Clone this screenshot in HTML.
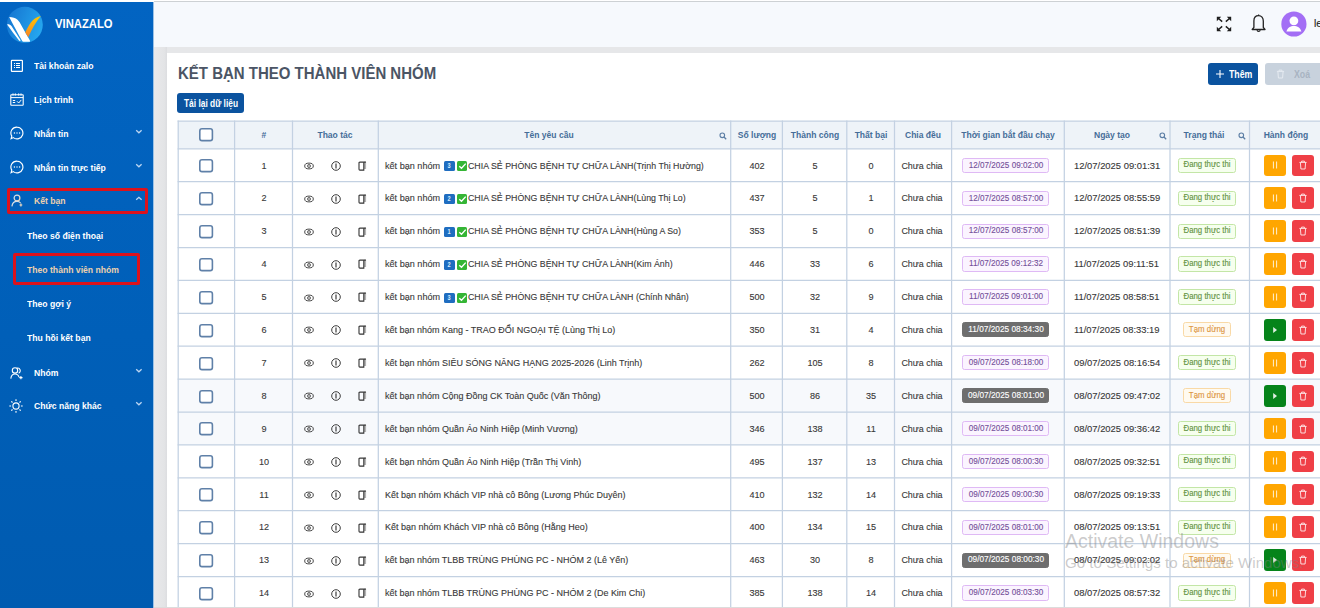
<!DOCTYPE html>
<html><head><meta charset="utf-8">
<style>
*{box-sizing:border-box;margin:0;padding:0}
html,body{width:1320px;height:608px;overflow:hidden;background:#e6e7e9;font-family:"Liberation Sans",sans-serif;position:relative}
.abs{position:absolute}
.t{position:absolute;white-space:nowrap;line-height:1}
#sidebar{left:0;top:2px;width:153px;height:606px;background:linear-gradient(180deg,#0264c2,#005fb8 55%,#005bb0)}
.grid{position:absolute;background:#c8d5e4}
.cb{position:absolute;width:14px;height:14px;border:2px solid #5a7fa9;border-radius:2.5px;background:#fff}
.tag{position:absolute;height:15.2px;border:1px solid;border-radius:2.5px}
.tp{background:#fbf4ff;border-color:#dfb9f5}
.td{background:#6e6e6e;border-color:#6e6e6e}
.tg{background:#f6ffee;border-color:#c3e6a6}
.to{background:#fffaf0;border-color:#f9d9a6}
.ab{position:absolute;width:21.8px;height:21.7px;border-radius:3px}
.ab svg{position:absolute;left:50%;top:50%;transform:translate(-50%,-50%)}
</style></head><body>
<div class="abs" style="left:0;top:0;width:1320px;height:2px;background:#fff"></div>
<div id="sidebar" class="abs"></div>
<div class="abs" style="left:153px;top:2px;width:1px;height:606px;background:#9cc2e6"></div>
<div class="abs" style="left:154px;top:1px;width:1166px;height:1px;background:#cdd1d4"></div>
<div class="abs" style="left:154px;top:2px;width:1166px;height:45px;background:#f6f9fd"></div>
<div class="abs" style="left:154px;top:47px;width:13px;height:561px;background:linear-gradient(90deg,#e9e9eb,#e3e4e6 80%,#dcdde0)"></div>
<div class="abs" style="left:166.7px;top:53px;width:1160px;height:560px;background:#fff"></div>

<svg class="abs" style="left:0;top:0" width="50" height="50" viewBox="0 0 50 50">
<defs><linearGradient id="og" x1="0" y1="0" x2="0" y2="1"><stop offset="0" stop-color="#ffc800"/><stop offset="1" stop-color="#f5832a"/></linearGradient></defs>
<linearGradient id="cg" x1="0" y1="0.3" x2="1" y2="0.7"><stop offset="0" stop-color="#1677d2"/><stop offset="1" stop-color="#26a9f0"/></linearGradient><circle cx="24.8" cy="24.8" r="18" fill="url(#cg)"/>
<path d="M9.2 17 C12.5 17.2 15.5 17.8 17.5 19.8 C19 21.2 20.5 23.5 22.4 27.3 L29.9 40.4 C30.3 41.1 29.9 41.7 29.2 41.7 L23.4 41.7 C22.8 41.7 22.4 41.3 22.1 40.7 C18 33.5 13.5 25.5 9.2 17 Z" fill="#fff"/>
<path d="M7.1 24.4 C8.6 24.1 10.1 24.5 11.6 26.2 L20.8 40.6 L19.4 40.9 C15 35.5 11 30 7.1 24.4 Z" fill="#fff"/>
<path d="M40.8 16 C36.5 17 33 19.5 30.5 23 C28.5 26 26.6 29.5 25.2 32.6 L28.3 37.2 C31.5 30 35.5 22.5 40.8 16 Z" fill="url(#og)"/>
</svg>
<div class="t" style="left:55.00px;top:18px;font-size:12.8px;color:#fff;font-weight:bold;transform:scaleX(0.88);transform-origin:0 0;">VINAZALO</div>
<div class="abs" style="left:10px;top:59px;line-height:0"><svg width="14" height="14" viewBox="0 0 14 14"><rect x="1.4" y="1.4" width="11" height="11" rx="0.6" fill="none" stroke="#fff" stroke-width="1.2"/><path d="M4 4.5H5M4 6.5H5M4 8.5H5M6 4.5H10M6 6.5H10M6 8.5H10" stroke="#fff" stroke-width="1"/></svg></div>
<div class="t" style="left:34.00px;top:61px;font-size:9.8px;color:#fff;font-weight:bold;transform:scaleX(0.88);transform-origin:0 0;">Tài khoản zalo</div>
<div class="abs" style="left:9.8px;top:93.3px;line-height:0"><svg width="14" height="13" viewBox="0 0 14 13"><rect x="0.8" y="1.8" width="12.4" height="10.4" rx="0.5" fill="none" stroke="#fff" stroke-width="1.1"/><path d="M0.8 4.6H13.2M3 0.4V2.6M5.3 0.4V2.6M8.7 0.4V2.6M11 0.4V2.6M2.8 7.5H5.2M2.8 9.5H5.2M7 8.3L8.7 10L11.3 6.9" fill="none" stroke="#fff" stroke-width="1"/></svg></div>
<div class="t" style="left:34.00px;top:95px;font-size:9.8px;color:#fff;font-weight:bold;transform:scaleX(0.88);transform-origin:0 0;">Lịch trình</div>
<div class="abs" style="left:9.6px;top:126.3px;line-height:0"><svg width="14" height="14" viewBox="0 0 14 14"><path d="M7 1.1A5.9 5.9 0 1 1 3.3 11.6L1.1 12.7L1.8 10.1A5.9 5.9 0 0 1 7 1.1Z" fill="none" stroke="#fff" stroke-width="1.15"/><circle cx="4.4" cy="7" r="0.7" fill="#fff"/><circle cx="7" cy="7" r="0.7" fill="#fff"/><circle cx="9.6" cy="7" r="0.7" fill="#fff"/></svg></div>
<div class="t" style="left:34.00px;top:129px;font-size:9.8px;color:#fff;font-weight:bold;transform:scaleX(0.88);transform-origin:0 0;">Nhắn tin</div>
<svg class="abs" style="left:135px;top:128.7px" width="8" height="6" viewBox="0 0 8 6"><path d="M1.2 1.3L3.9 3.8L6.6 1.3" fill="none" stroke="#bcd6f2" stroke-width="1.3"/></svg>
<div class="abs" style="left:9.6px;top:160.3px;line-height:0"><svg width="14" height="14" viewBox="0 0 14 14"><path d="M7 1.1A5.9 5.9 0 1 1 3.3 11.6L1.1 12.7L1.8 10.1A5.9 5.9 0 0 1 7 1.1Z" fill="none" stroke="#fff" stroke-width="1.15"/><circle cx="4.4" cy="7" r="0.7" fill="#fff"/><circle cx="7" cy="7" r="0.7" fill="#fff"/><circle cx="9.6" cy="7" r="0.7" fill="#fff"/></svg></div>
<div class="t" style="left:34.00px;top:163px;font-size:9.8px;color:#fff;font-weight:bold;transform:scaleX(0.88);transform-origin:0 0;">Nhắn tin trực tiếp</div>
<svg class="abs" style="left:135px;top:162.7px" width="8" height="6" viewBox="0 0 8 6"><path d="M1.2 1.3L3.9 3.8L6.6 1.3" fill="none" stroke="#bcd6f2" stroke-width="1.3"/></svg>
<div class="abs" style="left:10.5px;top:194.3px;line-height:0"><svg width="13" height="13" viewBox="0 0 13 13"><defs><linearGradient id="ug" x1="0" y1="0" x2="1" y2="1"><stop offset="0" stop-color="#cfe3f7"/><stop offset="1" stop-color="#efd3b0"/></linearGradient></defs><circle cx="6" cy="4" r="2.9" fill="none" stroke="url(#ug)" stroke-width="1.2"/><path d="M0.9 12.3C1.4 9 3.4 7.4 6 7.4C7.6 7.4 8.8 8 9.6 9M9.9 9.6V12.4M8.5 11H11.3" fill="none" stroke="url(#ug)" stroke-width="1.2"/></svg></div>
<div class="t" style="left:34.00px;top:196px;font-size:9.8px;color:#ecd0ae;font-weight:bold;transform:scaleX(0.88);transform-origin:0 0;">Kết bạn</div>
<svg class="abs" style="left:135px;top:195.7px" width="8" height="6" viewBox="0 0 8 6"><path d="M1.2 3.8L3.9 1.3L6.6 3.8" fill="none" stroke="#bcd6f2" stroke-width="1.3"/></svg>
<div class="abs" style="left:10.3px;top:365.5px;line-height:0"><svg width="14" height="14" viewBox="0 0 14 14"><circle cx="5" cy="4.4" r="2.7" fill="none" stroke="#fff" stroke-width="1.1"/><path d="M6.6 2.3A2.5 2.5 0 1 1 8.6 7.2" fill="none" stroke="#fff" stroke-width="1.1"/><path d="M0.8 12.6C1.2 9.6 2.8 8 5 8C7 8 8.5 9.2 9 11.2M10.9 10V13.2M9.3 11.6H12.5" fill="none" stroke="#fff" stroke-width="1.1"/></svg></div>
<div class="t" style="left:34.00px;top:368px;font-size:9.8px;color:#fff;font-weight:bold;transform:scaleX(0.88);transform-origin:0 0;">Nhóm</div>
<svg class="abs" style="left:135px;top:367.7px" width="8" height="6" viewBox="0 0 8 6"><path d="M1.2 1.3L3.9 3.8L6.6 1.3" fill="none" stroke="#bcd6f2" stroke-width="1.3"/></svg>
<div class="abs" style="left:9.4px;top:399.3px;line-height:0"><svg width="14" height="14" viewBox="0 0 14 14"><circle cx="7" cy="7" r="3.1" fill="none" stroke="#fff" stroke-width="1.1"/><path d="M7 0.3V2.1M7 11.9V13.7M0.3 7H2.1M11.9 7H13.7M2.3 2.3L3.5 3.5M10.5 10.5L11.7 11.7M2.3 11.7L3.5 10.5M10.5 3.5L11.7 2.3" stroke="#fff" stroke-width="1.1"/></svg></div>
<div class="t" style="left:34.00px;top:401px;font-size:9.8px;color:#fff;font-weight:bold;transform:scaleX(0.88);transform-origin:0 0;">Chức năng khác</div>
<svg class="abs" style="left:135px;top:400.7px" width="8" height="6" viewBox="0 0 8 6"><path d="M1.2 1.3L3.9 3.8L6.6 1.3" fill="none" stroke="#bcd6f2" stroke-width="1.3"/></svg>
<div class="t" style="left:26.50px;top:231px;font-size:9.8px;color:#fff;font-weight:bold;transform:scaleX(0.88);transform-origin:0 0;">Theo số điện thoại</div>
<div class="t" style="left:26.50px;top:265px;font-size:9.8px;color:#ecd0ae;font-weight:bold;transform:scaleX(0.88);transform-origin:0 0;">Theo thành viên nhóm</div>
<div class="t" style="left:26.50px;top:299px;font-size:9.8px;color:#fff;font-weight:bold;transform:scaleX(0.88);transform-origin:0 0;">Theo gợi ý</div>
<div class="t" style="left:26.50px;top:333px;font-size:9.8px;color:#fff;font-weight:bold;transform:scaleX(0.88);transform-origin:0 0;">Thu hồi kết bạn</div>
<div class="abs" style="left:7px;top:188px;width:141px;height:26px;border:3px solid #dc121c;border-radius:2px"></div>
<div class="abs" style="left:13px;top:253px;width:127px;height:32px;border:3px solid #dc121c;border-radius:2px"></div>
<svg class="abs" style="left:1216px;top:16px" width="16" height="16" viewBox="0 0 16 16"><g fill="#1e1e1e">
<path d="M0.8 0.8H5.2L0.8 5.2Z"/><path d="M15.2 0.8H10.8L15.2 5.2Z"/><path d="M0.8 15.2H5.2L0.8 10.8Z"/><path d="M15.2 15.2H10.8L15.2 10.8Z"/></g>
<path d="M2.5 2.5L6.2 5.6M13.5 2.5L9.8 5.6M2.5 13.5L6.2 10.4M13.5 13.5L9.8 10.4" stroke="#1e1e1e" stroke-width="1.5"/></svg>
<svg class="abs" style="left:1251px;top:14px" width="15" height="19" viewBox="0 0 15 19">
<path d="M7.6 1.6C4.7 1.6 2.9 3.9 2.9 6.9V13.4L1.2 15.5H14L12.3 13.4V6.9C12.3 3.9 10.5 1.6 7.6 1.6Z" fill="none" stroke="#222" stroke-width="1.3" stroke-linejoin="round"/>
<path d="M7.6 0.5V1.8" stroke="#222" stroke-width="1.2"/><path d="M6.1 15.9A1.5 1.5 0 0 0 9.1 15.9" fill="none" stroke="#222" stroke-width="1.1"/></svg>
<svg class="abs" style="left:1280.5px;top:10.8px" width="26" height="26" viewBox="0 0 26 26">
<circle cx="12.9" cy="13" r="12.6" fill="#a36ef5"/><circle cx="12.9" cy="9.8" r="4.4" fill="#fff"/><path d="M5.4 20.6C6.5 16.8 9.5 15.1 12.9 15.1S19.3 16.8 20.4 20.6Z" fill="#fff"/></svg>
<div class="t" style="left:1313.60px;top:18px;font-size:11px;color:#262626;font-weight:normal;transform:scaleX(0.95);-webkit-text-stroke:0.12px currentColor;transform-origin:0 0;">le</div>
<div class="t" style="left:178.40px;top:65px;font-size:17.4px;color:#4b5565;font-weight:bold;transform:scaleX(0.862);transform-origin:0 0;">KẾT BẠN THEO THÀNH VIÊN NHÓM</div>
<div class="abs" style="left:177.4px;top:92.8px;width:66.8px;height:20.5px;background:#0b539f;border-radius:3px"></div>
<div class="t" style="left:10.80px;width:400px;text-align:center;top:99px;font-size:10px;color:#fff;font-weight:bold;transform:scaleX(0.84);transform-origin:50% 0;">Tải lại dữ liệu</div>
<div class="abs" style="left:1208px;top:62.7px;width:49.8px;height:22.1px;background:#0b539f;border-radius:3px"></div>
<svg class="abs" style="left:1214.5px;top:69px" width="10" height="10" viewBox="0 0 10 10"><path d="M5 1V9M1 5H9" stroke="#fff" stroke-width="1.1"/></svg>
<div class="t" style="left:1228.80px;top:70px;font-size:10.2px;color:#fff;font-weight:bold;transform:scaleX(0.86);transform-origin:0 0;">Thêm</div>
<div class="abs" style="left:1265.3px;top:62.7px;width:70px;height:22.1px;background:#c8d2dd;border-radius:3px"></div>
<svg class="abs" style="left:1276px;top:68.5px" width="9" height="10" viewBox="0 0 9 10"><path d="M0.9 2.4H8.1M3.1 2.3V1.1H5.9V2.3M1.9 2.6L2.4 9H6.6L7.1 2.6" fill="none" stroke="#e6ebf1" stroke-width="1"/></svg>
<div class="t" style="left:1294.00px;top:70px;font-size:10.2px;color:#a8b4c2;font-weight:bold;transform:scaleX(0.86);transform-origin:0 0;">Xoá</div>
<div class="abs" style="left:178.2px;top:121.2px;width:1151.8px;height:27.6px;background:#eef3f8"></div>
<div class="abs" style="left:178.2px;top:379.1px;width:1151.8px;height:32.9px;background:#f7f9fc"></div>
<div class="abs" style="left:178.2px;top:412.0px;width:1151.8px;height:32.9px;background:#f7f9fc"></div>
<svg class="abs" style="left:0;top:0" width="1320" height="608" viewBox="0 0 1320 608"><g stroke="#c3d1e2" stroke-width="1.25" fill="none"><path d="M178.20 120.60V608" /><path d="M234.60 120.60V608" /><path d="M292.50 120.60V608" /><path d="M378.30 120.60V608" /><path d="M730.70 120.60V608" /><path d="M782.40 120.60V608" /><path d="M846.80 120.60V608" /><path d="M894.50 120.60V608" /><path d="M951.60 120.60V608" /><path d="M1064.30 120.60V608" /><path d="M1170.00 120.60V608" /><path d="M1249.50 120.60V608" /><path d="M177.60 121.20H1320" /><path d="M177.60 148.80H1320" /><path d="M177.60 181.70H1320" /><path d="M177.60 214.60H1320" /><path d="M177.60 247.50H1320" /><path d="M177.60 280.40H1320" /><path d="M177.60 313.30H1320" /><path d="M177.60 346.20H1320" /><path d="M177.60 379.10H1320" /><path d="M177.60 412.00H1320" /><path d="M177.60 444.90H1320" /><path d="M177.60 477.80H1320" /><path d="M177.60 510.70H1320" /><path d="M177.60 543.60H1320" /><path d="M177.60 576.50H1320" /><path d="M177.60 609.40H1320" /></g></svg>
<div class="abs" style="left:199.2px;top:128.4px;line-height:0"><svg width="15" height="14" viewBox="0 0 15 14"><rect x="0.8" y="0.8" width="12.6" height="11.8" rx="2.2" fill="#fff" stroke="#5f80a8" stroke-width="1.6"/></svg></div>
<div class="t" style="left:63.55px;width:400px;text-align:center;top:130px;font-size:9.6px;color:#456d98;font-weight:bold;transform:scaleX(0.89);transform-origin:50% 0;">#</div>
<div class="t" style="left:135.40px;width:400px;text-align:center;top:130px;font-size:9.6px;color:#456d98;font-weight:bold;transform:scaleX(0.89);transform-origin:50% 0;">Thao tác</div>
<div class="t" style="left:349.20px;width:400px;text-align:center;top:130px;font-size:9.6px;color:#456d98;font-weight:bold;transform:scaleX(0.89);transform-origin:50% 0;">Tên yêu cầu</div>
<div class="abs" style="left:719.4000000000001px;top:131.8px;line-height:0"><svg width="8" height="8" viewBox="0 0 8 8"><circle cx="3.3" cy="3.3" r="2.3" fill="none" stroke="#5c7ea5" stroke-width="1.1"/><path d="M5 5L7.2 7.2" stroke="#5c7ea5" stroke-width="1.3"/></svg></div>
<div class="t" style="left:556.55px;width:400px;text-align:center;top:130px;font-size:9.6px;color:#456d98;font-weight:bold;transform:scaleX(0.89);transform-origin:50% 0;">Số lượng</div>
<div class="t" style="left:614.60px;width:400px;text-align:center;top:130px;font-size:9.6px;color:#456d98;font-weight:bold;transform:scaleX(0.89);transform-origin:50% 0;">Thành công</div>
<div class="t" style="left:670.65px;width:400px;text-align:center;top:130px;font-size:9.6px;color:#456d98;font-weight:bold;transform:scaleX(0.89);transform-origin:50% 0;">Thất bại</div>
<div class="t" style="left:723.05px;width:400px;text-align:center;top:130px;font-size:9.6px;color:#456d98;font-weight:bold;transform:scaleX(0.89);transform-origin:50% 0;">Chia đều</div>
<div class="t" style="left:807.95px;width:400px;text-align:center;top:130px;font-size:9.6px;color:#456d98;font-weight:bold;transform:scaleX(0.89);transform-origin:50% 0;">Thời gian bắt đầu chạy</div>
<div class="t" style="left:911.85px;width:400px;text-align:center;top:130px;font-size:9.6px;color:#456d98;font-weight:bold;transform:scaleX(0.89);transform-origin:50% 0;">Ngày tạo</div>
<div class="abs" style="left:1158.7px;top:131.8px;line-height:0"><svg width="8" height="8" viewBox="0 0 8 8"><circle cx="3.3" cy="3.3" r="2.3" fill="none" stroke="#5c7ea5" stroke-width="1.1"/><path d="M5 5L7.2 7.2" stroke="#5c7ea5" stroke-width="1.3"/></svg></div>
<div class="t" style="left:1004.45px;width:400px;text-align:center;top:130px;font-size:9.6px;color:#456d98;font-weight:bold;transform:scaleX(0.89);transform-origin:50% 0;">Trạng thái</div>
<div class="abs" style="left:1238.2px;top:131.8px;line-height:0"><svg width="8" height="8" viewBox="0 0 8 8"><circle cx="3.3" cy="3.3" r="2.3" fill="none" stroke="#5c7ea5" stroke-width="1.1"/><path d="M5 5L7.2 7.2" stroke="#5c7ea5" stroke-width="1.3"/></svg></div>
<div class="t" style="left:1085.50px;width:400px;text-align:center;top:130px;font-size:9.6px;color:#456d98;font-weight:bold;transform:scaleX(0.89);transform-origin:50% 0;">Hành động</div>
<div class="abs" style="left:199.2px;top:159.25px;line-height:0"><svg width="15" height="14" viewBox="0 0 15 14"><rect x="0.8" y="0.8" width="12.6" height="11.8" rx="2.2" fill="#fff" stroke="#5f80a8" stroke-width="1.6"/></svg></div>
<div class="t" style="left:63.55px;width:400px;text-align:center;top:161px;font-size:9.9px;color:#383838;font-weight:normal;transform:scaleX(0.92);-webkit-text-stroke:0.12px currentColor;transform-origin:50% 0;">1</div>
<div class="abs" style="left:303.5px;top:161.9px;line-height:0"><svg width="10" height="8" viewBox="0 0 10 8"><ellipse cx="5" cy="4" rx="4.3" ry="2.9" fill="none" stroke="#4a4a4a" stroke-width="1"/><circle cx="5" cy="4" r="1.5" fill="none" stroke="#555" stroke-width="0.9"/><path d="M5 2.8V5.2" stroke="#666" stroke-width="0.7"/></svg></div>
<div class="abs" style="left:330.5px;top:160.8px;line-height:0"><svg width="10" height="10" viewBox="0 0 10 10"><circle cx="5" cy="5" r="4.3" fill="none" stroke="#3c3c3c" stroke-width="1"/><path d="M5 2.6V7.4" stroke="#2a2a2a" stroke-width="1.1"/></svg></div>
<div class="abs" style="left:357.6px;top:160.75px;line-height:0"><svg width="9" height="10" viewBox="0 0 9 10"><path d="M6 0.7H8.1V8H6Z" fill="#b4b4b4"/><path d="M1 2.1Q1 1.2 1.9 1.2H7.9" stroke="#3a3a3a" stroke-width="1.2" fill="none"/><path d="M1 1.8V8.2Q1 9.1 1.9 9.1H5.8V1.2" stroke="#333" stroke-width="1.1" fill="none"/></svg></div>
<div class="t" style="left:384.70px;top:161px;font-size:9.9px;color:#383838;font-weight:normal;transform:scaleX(0.92);-webkit-text-stroke:0.12px currentColor;transform-origin:0 0;">kết bạn nhóm </div>
<div class="abs" style="left:443.8px;top:161.05px;width:11px;height:10px;background:#1f6dc0;border-radius:1.5px"></div>
<div class="t" style="left:249.30px;width:400px;text-align:center;top:162px;font-size:7px;color:#d9ecff;font-weight:bold;transform:scaleX(0.8);transform-origin:50% 0;">3</div>
<div class="abs" style="left:456.6px;top:161.05px;width:10.8px;height:10px;background:#35b535;border-radius:1.5px"></div>
<svg class="abs" style="left:457.6px;top:162.05px" width="9" height="8" viewBox="0 0 9 8"><path d="M1.3 4.2L3.5 6.2L7.7 1.6" fill="none" stroke="#fff" stroke-width="1.4"/></svg>
<div class="t" style="left:468.00px;top:161px;font-size:9.9px;color:#383838;font-weight:normal;transform:scaleX(0.891);-webkit-text-stroke:0.12px currentColor;transform-origin:0 0;">CHIA SẺ PHÒNG BỆNH TỰ CHỮA LÀNH(Trịnh Thị Hường)</div>
<div class="t" style="left:556.55px;width:400px;text-align:center;top:161px;font-size:9.9px;color:#383838;font-weight:normal;transform:scaleX(0.92);-webkit-text-stroke:0.12px currentColor;transform-origin:50% 0;">402</div>
<div class="t" style="left:614.60px;width:400px;text-align:center;top:161px;font-size:9.9px;color:#383838;font-weight:normal;transform:scaleX(0.92);-webkit-text-stroke:0.12px currentColor;transform-origin:50% 0;">5</div>
<div class="t" style="left:670.65px;width:400px;text-align:center;top:161px;font-size:9.9px;color:#383838;font-weight:normal;transform:scaleX(0.92);-webkit-text-stroke:0.12px currentColor;transform-origin:50% 0;">0</div>
<div class="t" style="left:722.05px;width:400px;text-align:center;top:161px;font-size:9.9px;color:#383838;font-weight:normal;transform:scaleX(0.903);-webkit-text-stroke:0.12px currentColor;transform-origin:50% 0;">Chưa chia</div>
<div class="tag tp" style="left:962.3px;width:86.3px;top:157.75px"></div>
<div class="t" style="left:805.90px;width:400px;text-align:center;top:161px;font-size:8.8px;color:#74509a;font-weight:normal;transform:scaleX(0.924);-webkit-text-stroke:0.12px currentColor;transform-origin:50% 0;">12/07/2025 09:02:00</div>
<div class="t" style="left:1073.50px;top:161px;font-size:9.9px;color:#383838;font-weight:normal;transform:scaleX(0.952);-webkit-text-stroke:0.12px currentColor;transform-origin:0 0;">12/07/2025 09:01:31</div>
<div class="tag tg" style="left:1177.8px;width:57.9px;top:157.75px"></div>
<div class="t" style="left:1007.20px;width:400px;text-align:center;top:160px;font-size:8.8px;color:#62923f;font-weight:normal;transform:scaleX(0.889);-webkit-text-stroke:0.12px currentColor;transform-origin:50% 0;">Đang thực thi</div>
<div class="ab" style="left:1264.1px;top:154.55px;background:#ffa600"><svg width="6" height="8" viewBox="0 0 6 8"><rect x="0.9" y="0.5" width="1.1" height="7" fill="#fff" opacity=".75"/><rect x="4" y="0.5" width="1.1" height="7" fill="#fff" opacity=".75"/></svg></div>
<div class="ab" style="left:1292px;top:154.55px;background:#ef3f46"><svg width="9" height="10" viewBox="0 0 9 10"><path d="M0.9 2.4H8.1M3.1 2.3V1.1H5.9V2.3M1.9 2.6L2.4 9H6.6L7.1 2.6" fill="none" stroke="#fff" stroke-opacity=".85" stroke-width="0.95" stroke-linejoin="round"/></svg></div>
<div class="abs" style="left:199.2px;top:192.15px;line-height:0"><svg width="15" height="14" viewBox="0 0 15 14"><rect x="0.8" y="0.8" width="12.6" height="11.8" rx="2.2" fill="#fff" stroke="#5f80a8" stroke-width="1.6"/></svg></div>
<div class="t" style="left:63.55px;width:400px;text-align:center;top:193px;font-size:9.9px;color:#383838;font-weight:normal;transform:scaleX(0.92);-webkit-text-stroke:0.12px currentColor;transform-origin:50% 0;">2</div>
<div class="abs" style="left:303.5px;top:194.8px;line-height:0"><svg width="10" height="8" viewBox="0 0 10 8"><ellipse cx="5" cy="4" rx="4.3" ry="2.9" fill="none" stroke="#4a4a4a" stroke-width="1"/><circle cx="5" cy="4" r="1.5" fill="none" stroke="#555" stroke-width="0.9"/><path d="M5 2.8V5.2" stroke="#666" stroke-width="0.7"/></svg></div>
<div class="abs" style="left:330.5px;top:193.70000000000002px;line-height:0"><svg width="10" height="10" viewBox="0 0 10 10"><circle cx="5" cy="5" r="4.3" fill="none" stroke="#3c3c3c" stroke-width="1"/><path d="M5 2.6V7.4" stroke="#2a2a2a" stroke-width="1.1"/></svg></div>
<div class="abs" style="left:357.6px;top:193.65px;line-height:0"><svg width="9" height="10" viewBox="0 0 9 10"><path d="M6 0.7H8.1V8H6Z" fill="#b4b4b4"/><path d="M1 2.1Q1 1.2 1.9 1.2H7.9" stroke="#3a3a3a" stroke-width="1.2" fill="none"/><path d="M1 1.8V8.2Q1 9.1 1.9 9.1H5.8V1.2" stroke="#333" stroke-width="1.1" fill="none"/></svg></div>
<div class="t" style="left:384.70px;top:193px;font-size:9.9px;color:#383838;font-weight:normal;transform:scaleX(0.92);-webkit-text-stroke:0.12px currentColor;transform-origin:0 0;">kết bạn nhóm </div>
<div class="abs" style="left:443.8px;top:193.95px;width:11px;height:10px;background:#1f6dc0;border-radius:1.5px"></div>
<div class="t" style="left:249.30px;width:400px;text-align:center;top:195px;font-size:7px;color:#d9ecff;font-weight:bold;transform:scaleX(0.8);transform-origin:50% 0;">2</div>
<div class="abs" style="left:456.6px;top:193.95px;width:10.8px;height:10px;background:#35b535;border-radius:1.5px"></div>
<svg class="abs" style="left:457.6px;top:194.95px" width="9" height="8" viewBox="0 0 9 8"><path d="M1.3 4.2L3.5 6.2L7.7 1.6" fill="none" stroke="#fff" stroke-width="1.4"/></svg>
<div class="t" style="left:468.00px;top:193px;font-size:9.9px;color:#383838;font-weight:normal;transform:scaleX(0.891);-webkit-text-stroke:0.12px currentColor;transform-origin:0 0;">CHIA SẺ PHÒNG BỆNH TỰ CHỮA LÀNH(Lùng Thị Lo)</div>
<div class="t" style="left:556.55px;width:400px;text-align:center;top:193px;font-size:9.9px;color:#383838;font-weight:normal;transform:scaleX(0.92);-webkit-text-stroke:0.12px currentColor;transform-origin:50% 0;">437</div>
<div class="t" style="left:614.60px;width:400px;text-align:center;top:193px;font-size:9.9px;color:#383838;font-weight:normal;transform:scaleX(0.92);-webkit-text-stroke:0.12px currentColor;transform-origin:50% 0;">5</div>
<div class="t" style="left:670.65px;width:400px;text-align:center;top:193px;font-size:9.9px;color:#383838;font-weight:normal;transform:scaleX(0.92);-webkit-text-stroke:0.12px currentColor;transform-origin:50% 0;">1</div>
<div class="t" style="left:722.05px;width:400px;text-align:center;top:193px;font-size:9.9px;color:#383838;font-weight:normal;transform:scaleX(0.903);-webkit-text-stroke:0.12px currentColor;transform-origin:50% 0;">Chưa chia</div>
<div class="tag tp" style="left:962.3px;width:86.3px;top:190.65px"></div>
<div class="t" style="left:805.90px;width:400px;text-align:center;top:194px;font-size:8.8px;color:#74509a;font-weight:normal;transform:scaleX(0.924);-webkit-text-stroke:0.12px currentColor;transform-origin:50% 0;">12/07/2025 08:57:00</div>
<div class="t" style="left:1073.50px;top:193px;font-size:9.9px;color:#383838;font-weight:normal;transform:scaleX(0.952);-webkit-text-stroke:0.12px currentColor;transform-origin:0 0;">12/07/2025 08:55:59</div>
<div class="tag tg" style="left:1177.8px;width:57.9px;top:190.65px"></div>
<div class="t" style="left:1007.20px;width:400px;text-align:center;top:193px;font-size:8.8px;color:#62923f;font-weight:normal;transform:scaleX(0.889);-webkit-text-stroke:0.12px currentColor;transform-origin:50% 0;">Đang thực thi</div>
<div class="ab" style="left:1264.1px;top:187.45px;background:#ffa600"><svg width="6" height="8" viewBox="0 0 6 8"><rect x="0.9" y="0.5" width="1.1" height="7" fill="#fff" opacity=".75"/><rect x="4" y="0.5" width="1.1" height="7" fill="#fff" opacity=".75"/></svg></div>
<div class="ab" style="left:1292px;top:187.45px;background:#ef3f46"><svg width="9" height="10" viewBox="0 0 9 10"><path d="M0.9 2.4H8.1M3.1 2.3V1.1H5.9V2.3M1.9 2.6L2.4 9H6.6L7.1 2.6" fill="none" stroke="#fff" stroke-opacity=".85" stroke-width="0.95" stroke-linejoin="round"/></svg></div>
<div class="abs" style="left:199.2px;top:225.05px;line-height:0"><svg width="15" height="14" viewBox="0 0 15 14"><rect x="0.8" y="0.8" width="12.6" height="11.8" rx="2.2" fill="#fff" stroke="#5f80a8" stroke-width="1.6"/></svg></div>
<div class="t" style="left:63.55px;width:400px;text-align:center;top:226px;font-size:9.9px;color:#383838;font-weight:normal;transform:scaleX(0.92);-webkit-text-stroke:0.12px currentColor;transform-origin:50% 0;">3</div>
<div class="abs" style="left:303.5px;top:227.70000000000002px;line-height:0"><svg width="10" height="8" viewBox="0 0 10 8"><ellipse cx="5" cy="4" rx="4.3" ry="2.9" fill="none" stroke="#4a4a4a" stroke-width="1"/><circle cx="5" cy="4" r="1.5" fill="none" stroke="#555" stroke-width="0.9"/><path d="M5 2.8V5.2" stroke="#666" stroke-width="0.7"/></svg></div>
<div class="abs" style="left:330.5px;top:226.60000000000002px;line-height:0"><svg width="10" height="10" viewBox="0 0 10 10"><circle cx="5" cy="5" r="4.3" fill="none" stroke="#3c3c3c" stroke-width="1"/><path d="M5 2.6V7.4" stroke="#2a2a2a" stroke-width="1.1"/></svg></div>
<div class="abs" style="left:357.6px;top:226.55px;line-height:0"><svg width="9" height="10" viewBox="0 0 9 10"><path d="M6 0.7H8.1V8H6Z" fill="#b4b4b4"/><path d="M1 2.1Q1 1.2 1.9 1.2H7.9" stroke="#3a3a3a" stroke-width="1.2" fill="none"/><path d="M1 1.8V8.2Q1 9.1 1.9 9.1H5.8V1.2" stroke="#333" stroke-width="1.1" fill="none"/></svg></div>
<div class="t" style="left:384.70px;top:226px;font-size:9.9px;color:#383838;font-weight:normal;transform:scaleX(0.92);-webkit-text-stroke:0.12px currentColor;transform-origin:0 0;">kết bạn nhóm </div>
<div class="abs" style="left:443.8px;top:226.85px;width:11px;height:10px;background:#1f6dc0;border-radius:1.5px"></div>
<div class="t" style="left:249.30px;width:400px;text-align:center;top:228px;font-size:7px;color:#d9ecff;font-weight:bold;transform:scaleX(0.8);transform-origin:50% 0;">1</div>
<div class="abs" style="left:456.6px;top:226.85px;width:10.8px;height:10px;background:#35b535;border-radius:1.5px"></div>
<svg class="abs" style="left:457.6px;top:227.85px" width="9" height="8" viewBox="0 0 9 8"><path d="M1.3 4.2L3.5 6.2L7.7 1.6" fill="none" stroke="#fff" stroke-width="1.4"/></svg>
<div class="t" style="left:468.00px;top:226px;font-size:9.9px;color:#383838;font-weight:normal;transform:scaleX(0.891);-webkit-text-stroke:0.12px currentColor;transform-origin:0 0;">CHIA SẺ PHÒNG BỆNH TỰ CHỮA LÀNH(Hùng A So)</div>
<div class="t" style="left:556.55px;width:400px;text-align:center;top:226px;font-size:9.9px;color:#383838;font-weight:normal;transform:scaleX(0.92);-webkit-text-stroke:0.12px currentColor;transform-origin:50% 0;">353</div>
<div class="t" style="left:614.60px;width:400px;text-align:center;top:226px;font-size:9.9px;color:#383838;font-weight:normal;transform:scaleX(0.92);-webkit-text-stroke:0.12px currentColor;transform-origin:50% 0;">5</div>
<div class="t" style="left:670.65px;width:400px;text-align:center;top:226px;font-size:9.9px;color:#383838;font-weight:normal;transform:scaleX(0.92);-webkit-text-stroke:0.12px currentColor;transform-origin:50% 0;">0</div>
<div class="t" style="left:722.05px;width:400px;text-align:center;top:226px;font-size:9.9px;color:#383838;font-weight:normal;transform:scaleX(0.903);-webkit-text-stroke:0.12px currentColor;transform-origin:50% 0;">Chưa chia</div>
<div class="tag tp" style="left:962.3px;width:86.3px;top:223.55px"></div>
<div class="t" style="left:805.90px;width:400px;text-align:center;top:226px;font-size:8.8px;color:#74509a;font-weight:normal;transform:scaleX(0.924);-webkit-text-stroke:0.12px currentColor;transform-origin:50% 0;">12/07/2025 08:57:00</div>
<div class="t" style="left:1073.50px;top:226px;font-size:9.9px;color:#383838;font-weight:normal;transform:scaleX(0.952);-webkit-text-stroke:0.12px currentColor;transform-origin:0 0;">12/07/2025 08:51:39</div>
<div class="tag tg" style="left:1177.8px;width:57.9px;top:223.55px"></div>
<div class="t" style="left:1007.20px;width:400px;text-align:center;top:226px;font-size:8.8px;color:#62923f;font-weight:normal;transform:scaleX(0.889);-webkit-text-stroke:0.12px currentColor;transform-origin:50% 0;">Đang thực thi</div>
<div class="ab" style="left:1264.1px;top:220.35px;background:#ffa600"><svg width="6" height="8" viewBox="0 0 6 8"><rect x="0.9" y="0.5" width="1.1" height="7" fill="#fff" opacity=".75"/><rect x="4" y="0.5" width="1.1" height="7" fill="#fff" opacity=".75"/></svg></div>
<div class="ab" style="left:1292px;top:220.35px;background:#ef3f46"><svg width="9" height="10" viewBox="0 0 9 10"><path d="M0.9 2.4H8.1M3.1 2.3V1.1H5.9V2.3M1.9 2.6L2.4 9H6.6L7.1 2.6" fill="none" stroke="#fff" stroke-opacity=".85" stroke-width="0.95" stroke-linejoin="round"/></svg></div>
<div class="abs" style="left:199.2px;top:257.95px;line-height:0"><svg width="15" height="14" viewBox="0 0 15 14"><rect x="0.8" y="0.8" width="12.6" height="11.8" rx="2.2" fill="#fff" stroke="#5f80a8" stroke-width="1.6"/></svg></div>
<div class="t" style="left:63.55px;width:400px;text-align:center;top:259px;font-size:9.9px;color:#383838;font-weight:normal;transform:scaleX(0.92);-webkit-text-stroke:0.12px currentColor;transform-origin:50% 0;">4</div>
<div class="abs" style="left:303.5px;top:260.59999999999997px;line-height:0"><svg width="10" height="8" viewBox="0 0 10 8"><ellipse cx="5" cy="4" rx="4.3" ry="2.9" fill="none" stroke="#4a4a4a" stroke-width="1"/><circle cx="5" cy="4" r="1.5" fill="none" stroke="#555" stroke-width="0.9"/><path d="M5 2.8V5.2" stroke="#666" stroke-width="0.7"/></svg></div>
<div class="abs" style="left:330.5px;top:259.5px;line-height:0"><svg width="10" height="10" viewBox="0 0 10 10"><circle cx="5" cy="5" r="4.3" fill="none" stroke="#3c3c3c" stroke-width="1"/><path d="M5 2.6V7.4" stroke="#2a2a2a" stroke-width="1.1"/></svg></div>
<div class="abs" style="left:357.6px;top:259.45px;line-height:0"><svg width="9" height="10" viewBox="0 0 9 10"><path d="M6 0.7H8.1V8H6Z" fill="#b4b4b4"/><path d="M1 2.1Q1 1.2 1.9 1.2H7.9" stroke="#3a3a3a" stroke-width="1.2" fill="none"/><path d="M1 1.8V8.2Q1 9.1 1.9 9.1H5.8V1.2" stroke="#333" stroke-width="1.1" fill="none"/></svg></div>
<div class="t" style="left:384.70px;top:259px;font-size:9.9px;color:#383838;font-weight:normal;transform:scaleX(0.92);-webkit-text-stroke:0.12px currentColor;transform-origin:0 0;">kết bạn nhóm </div>
<div class="abs" style="left:443.8px;top:259.75px;width:11px;height:10px;background:#1f6dc0;border-radius:1.5px"></div>
<div class="t" style="left:249.30px;width:400px;text-align:center;top:261px;font-size:7px;color:#d9ecff;font-weight:bold;transform:scaleX(0.8);transform-origin:50% 0;">2</div>
<div class="abs" style="left:456.6px;top:259.75px;width:10.8px;height:10px;background:#35b535;border-radius:1.5px"></div>
<svg class="abs" style="left:457.6px;top:260.75px" width="9" height="8" viewBox="0 0 9 8"><path d="M1.3 4.2L3.5 6.2L7.7 1.6" fill="none" stroke="#fff" stroke-width="1.4"/></svg>
<div class="t" style="left:468.00px;top:259px;font-size:9.9px;color:#383838;font-weight:normal;transform:scaleX(0.891);-webkit-text-stroke:0.12px currentColor;transform-origin:0 0;">CHIA SẺ PHÒNG BỆNH TỰ CHỮA LÀNH(Kim Ánh)</div>
<div class="t" style="left:556.55px;width:400px;text-align:center;top:259px;font-size:9.9px;color:#383838;font-weight:normal;transform:scaleX(0.92);-webkit-text-stroke:0.12px currentColor;transform-origin:50% 0;">446</div>
<div class="t" style="left:614.60px;width:400px;text-align:center;top:259px;font-size:9.9px;color:#383838;font-weight:normal;transform:scaleX(0.92);-webkit-text-stroke:0.12px currentColor;transform-origin:50% 0;">33</div>
<div class="t" style="left:670.65px;width:400px;text-align:center;top:259px;font-size:9.9px;color:#383838;font-weight:normal;transform:scaleX(0.92);-webkit-text-stroke:0.12px currentColor;transform-origin:50% 0;">6</div>
<div class="t" style="left:722.05px;width:400px;text-align:center;top:259px;font-size:9.9px;color:#383838;font-weight:normal;transform:scaleX(0.903);-webkit-text-stroke:0.12px currentColor;transform-origin:50% 0;">Chưa chia</div>
<div class="tag tp" style="left:962.3px;width:86.3px;top:256.45px"></div>
<div class="t" style="left:805.90px;width:400px;text-align:center;top:259px;font-size:8.8px;color:#74509a;font-weight:normal;transform:scaleX(0.924);-webkit-text-stroke:0.12px currentColor;transform-origin:50% 0;">11/07/2025 09:12:32</div>
<div class="t" style="left:1073.50px;top:259px;font-size:9.9px;color:#383838;font-weight:normal;transform:scaleX(0.952);-webkit-text-stroke:0.12px currentColor;transform-origin:0 0;">11/07/2025 09:11:51</div>
<div class="tag tg" style="left:1177.8px;width:57.9px;top:256.45px"></div>
<div class="t" style="left:1007.20px;width:400px;text-align:center;top:259px;font-size:8.8px;color:#62923f;font-weight:normal;transform:scaleX(0.889);-webkit-text-stroke:0.12px currentColor;transform-origin:50% 0;">Đang thực thi</div>
<div class="ab" style="left:1264.1px;top:253.25px;background:#ffa600"><svg width="6" height="8" viewBox="0 0 6 8"><rect x="0.9" y="0.5" width="1.1" height="7" fill="#fff" opacity=".75"/><rect x="4" y="0.5" width="1.1" height="7" fill="#fff" opacity=".75"/></svg></div>
<div class="ab" style="left:1292px;top:253.25px;background:#ef3f46"><svg width="9" height="10" viewBox="0 0 9 10"><path d="M0.9 2.4H8.1M3.1 2.3V1.1H5.9V2.3M1.9 2.6L2.4 9H6.6L7.1 2.6" fill="none" stroke="#fff" stroke-opacity=".85" stroke-width="0.95" stroke-linejoin="round"/></svg></div>
<div class="abs" style="left:199.2px;top:290.84999999999997px;line-height:0"><svg width="15" height="14" viewBox="0 0 15 14"><rect x="0.8" y="0.8" width="12.6" height="11.8" rx="2.2" fill="#fff" stroke="#5f80a8" stroke-width="1.6"/></svg></div>
<div class="t" style="left:63.55px;width:400px;text-align:center;top:292px;font-size:9.9px;color:#383838;font-weight:normal;transform:scaleX(0.92);-webkit-text-stroke:0.12px currentColor;transform-origin:50% 0;">5</div>
<div class="abs" style="left:303.5px;top:293.49999999999994px;line-height:0"><svg width="10" height="8" viewBox="0 0 10 8"><ellipse cx="5" cy="4" rx="4.3" ry="2.9" fill="none" stroke="#4a4a4a" stroke-width="1"/><circle cx="5" cy="4" r="1.5" fill="none" stroke="#555" stroke-width="0.9"/><path d="M5 2.8V5.2" stroke="#666" stroke-width="0.7"/></svg></div>
<div class="abs" style="left:330.5px;top:292.4px;line-height:0"><svg width="10" height="10" viewBox="0 0 10 10"><circle cx="5" cy="5" r="4.3" fill="none" stroke="#3c3c3c" stroke-width="1"/><path d="M5 2.6V7.4" stroke="#2a2a2a" stroke-width="1.1"/></svg></div>
<div class="abs" style="left:357.6px;top:292.34999999999997px;line-height:0"><svg width="9" height="10" viewBox="0 0 9 10"><path d="M6 0.7H8.1V8H6Z" fill="#b4b4b4"/><path d="M1 2.1Q1 1.2 1.9 1.2H7.9" stroke="#3a3a3a" stroke-width="1.2" fill="none"/><path d="M1 1.8V8.2Q1 9.1 1.9 9.1H5.8V1.2" stroke="#333" stroke-width="1.1" fill="none"/></svg></div>
<div class="t" style="left:384.70px;top:292px;font-size:9.9px;color:#383838;font-weight:normal;transform:scaleX(0.92);-webkit-text-stroke:0.12px currentColor;transform-origin:0 0;">kết bạn nhóm </div>
<div class="abs" style="left:443.8px;top:292.65px;width:11px;height:10px;background:#1f6dc0;border-radius:1.5px"></div>
<div class="t" style="left:249.30px;width:400px;text-align:center;top:294px;font-size:7px;color:#d9ecff;font-weight:bold;transform:scaleX(0.8);transform-origin:50% 0;">3</div>
<div class="abs" style="left:456.6px;top:292.65px;width:10.8px;height:10px;background:#35b535;border-radius:1.5px"></div>
<svg class="abs" style="left:457.6px;top:293.65px" width="9" height="8" viewBox="0 0 9 8"><path d="M1.3 4.2L3.5 6.2L7.7 1.6" fill="none" stroke="#fff" stroke-width="1.4"/></svg>
<div class="t" style="left:468.00px;top:292px;font-size:9.9px;color:#383838;font-weight:normal;transform:scaleX(0.891);-webkit-text-stroke:0.12px currentColor;transform-origin:0 0;">CHIA SẺ PHÒNG BỆNH TỰ CHỮA LÀNH (Chính Nhân)</div>
<div class="t" style="left:556.55px;width:400px;text-align:center;top:292px;font-size:9.9px;color:#383838;font-weight:normal;transform:scaleX(0.92);-webkit-text-stroke:0.12px currentColor;transform-origin:50% 0;">500</div>
<div class="t" style="left:614.60px;width:400px;text-align:center;top:292px;font-size:9.9px;color:#383838;font-weight:normal;transform:scaleX(0.92);-webkit-text-stroke:0.12px currentColor;transform-origin:50% 0;">32</div>
<div class="t" style="left:670.65px;width:400px;text-align:center;top:292px;font-size:9.9px;color:#383838;font-weight:normal;transform:scaleX(0.92);-webkit-text-stroke:0.12px currentColor;transform-origin:50% 0;">9</div>
<div class="t" style="left:722.05px;width:400px;text-align:center;top:292px;font-size:9.9px;color:#383838;font-weight:normal;transform:scaleX(0.903);-webkit-text-stroke:0.12px currentColor;transform-origin:50% 0;">Chưa chia</div>
<div class="tag tp" style="left:962.3px;width:86.3px;top:289.35px"></div>
<div class="t" style="left:805.90px;width:400px;text-align:center;top:292px;font-size:8.8px;color:#74509a;font-weight:normal;transform:scaleX(0.924);-webkit-text-stroke:0.12px currentColor;transform-origin:50% 0;">11/07/2025 09:01:00</div>
<div class="t" style="left:1073.50px;top:292px;font-size:9.9px;color:#383838;font-weight:normal;transform:scaleX(0.952);-webkit-text-stroke:0.12px currentColor;transform-origin:0 0;">11/07/2025 08:58:51</div>
<div class="tag tg" style="left:1177.8px;width:57.9px;top:289.35px"></div>
<div class="t" style="left:1007.20px;width:400px;text-align:center;top:292px;font-size:8.8px;color:#62923f;font-weight:normal;transform:scaleX(0.889);-webkit-text-stroke:0.12px currentColor;transform-origin:50% 0;">Đang thực thi</div>
<div class="ab" style="left:1264.1px;top:286.15px;background:#ffa600"><svg width="6" height="8" viewBox="0 0 6 8"><rect x="0.9" y="0.5" width="1.1" height="7" fill="#fff" opacity=".75"/><rect x="4" y="0.5" width="1.1" height="7" fill="#fff" opacity=".75"/></svg></div>
<div class="ab" style="left:1292px;top:286.15px;background:#ef3f46"><svg width="9" height="10" viewBox="0 0 9 10"><path d="M0.9 2.4H8.1M3.1 2.3V1.1H5.9V2.3M1.9 2.6L2.4 9H6.6L7.1 2.6" fill="none" stroke="#fff" stroke-opacity=".85" stroke-width="0.95" stroke-linejoin="round"/></svg></div>
<div class="abs" style="left:199.2px;top:323.75px;line-height:0"><svg width="15" height="14" viewBox="0 0 15 14"><rect x="0.8" y="0.8" width="12.6" height="11.8" rx="2.2" fill="#fff" stroke="#5f80a8" stroke-width="1.6"/></svg></div>
<div class="t" style="left:63.55px;width:400px;text-align:center;top:325px;font-size:9.9px;color:#383838;font-weight:normal;transform:scaleX(0.92);-webkit-text-stroke:0.12px currentColor;transform-origin:50% 0;">6</div>
<div class="abs" style="left:303.5px;top:326.4px;line-height:0"><svg width="10" height="8" viewBox="0 0 10 8"><ellipse cx="5" cy="4" rx="4.3" ry="2.9" fill="none" stroke="#4a4a4a" stroke-width="1"/><circle cx="5" cy="4" r="1.5" fill="none" stroke="#555" stroke-width="0.9"/><path d="M5 2.8V5.2" stroke="#666" stroke-width="0.7"/></svg></div>
<div class="abs" style="left:330.5px;top:325.3px;line-height:0"><svg width="10" height="10" viewBox="0 0 10 10"><circle cx="5" cy="5" r="4.3" fill="none" stroke="#3c3c3c" stroke-width="1"/><path d="M5 2.6V7.4" stroke="#2a2a2a" stroke-width="1.1"/></svg></div>
<div class="abs" style="left:357.6px;top:325.25px;line-height:0"><svg width="9" height="10" viewBox="0 0 9 10"><path d="M6 0.7H8.1V8H6Z" fill="#b4b4b4"/><path d="M1 2.1Q1 1.2 1.9 1.2H7.9" stroke="#3a3a3a" stroke-width="1.2" fill="none"/><path d="M1 1.8V8.2Q1 9.1 1.9 9.1H5.8V1.2" stroke="#333" stroke-width="1.1" fill="none"/></svg></div>
<div class="t" style="left:384.70px;top:325px;font-size:9.9px;color:#383838;font-weight:normal;transform:scaleX(0.91);-webkit-text-stroke:0.12px currentColor;transform-origin:0 0;">kết bạn nhóm Kang - TRAO ĐỔI NGOẠI TỆ (Lùng Thị Lo)</div>
<div class="t" style="left:556.55px;width:400px;text-align:center;top:325px;font-size:9.9px;color:#383838;font-weight:normal;transform:scaleX(0.92);-webkit-text-stroke:0.12px currentColor;transform-origin:50% 0;">350</div>
<div class="t" style="left:614.60px;width:400px;text-align:center;top:325px;font-size:9.9px;color:#383838;font-weight:normal;transform:scaleX(0.92);-webkit-text-stroke:0.12px currentColor;transform-origin:50% 0;">31</div>
<div class="t" style="left:670.65px;width:400px;text-align:center;top:325px;font-size:9.9px;color:#383838;font-weight:normal;transform:scaleX(0.92);-webkit-text-stroke:0.12px currentColor;transform-origin:50% 0;">4</div>
<div class="t" style="left:722.05px;width:400px;text-align:center;top:325px;font-size:9.9px;color:#383838;font-weight:normal;transform:scaleX(0.903);-webkit-text-stroke:0.12px currentColor;transform-origin:50% 0;">Chưa chia</div>
<div class="tag td" style="left:962.3px;width:86.3px;top:322.25px"></div>
<div class="t" style="left:805.90px;width:400px;text-align:center;top:325px;font-size:8.8px;color:#fff;font-weight:normal;transform:scaleX(0.943);-webkit-text-stroke:0.12px currentColor;transform-origin:50% 0;">11/07/2025 08:34:30</div>
<div class="t" style="left:1073.50px;top:325px;font-size:9.9px;color:#383838;font-weight:normal;transform:scaleX(0.952);-webkit-text-stroke:0.12px currentColor;transform-origin:0 0;">11/07/2025 08:33:19</div>
<div class="tag to" style="left:1183.4px;width:47.8px;top:322.25px"></div>
<div class="t" style="left:1007.30px;width:400px;text-align:center;top:325px;font-size:8.8px;color:#dc9440;font-weight:normal;transform:scaleX(0.894);-webkit-text-stroke:0.12px currentColor;transform-origin:50% 0;">Tạm dừng</div>
<div class="ab" style="left:1264.1px;top:319.05px;background:#06841a"><svg width="6" height="8" viewBox="0 0 6 8"><path d="M1.2 0.9L5 4L1.2 7.1Z" fill="#fff" opacity=".88"/></svg></div>
<div class="ab" style="left:1292px;top:319.05px;background:#ef3f46"><svg width="9" height="10" viewBox="0 0 9 10"><path d="M0.9 2.4H8.1M3.1 2.3V1.1H5.9V2.3M1.9 2.6L2.4 9H6.6L7.1 2.6" fill="none" stroke="#fff" stroke-opacity=".85" stroke-width="0.95" stroke-linejoin="round"/></svg></div>
<div class="abs" style="left:199.2px;top:356.65px;line-height:0"><svg width="15" height="14" viewBox="0 0 15 14"><rect x="0.8" y="0.8" width="12.6" height="11.8" rx="2.2" fill="#fff" stroke="#5f80a8" stroke-width="1.6"/></svg></div>
<div class="t" style="left:63.55px;width:400px;text-align:center;top:358px;font-size:9.9px;color:#383838;font-weight:normal;transform:scaleX(0.92);-webkit-text-stroke:0.12px currentColor;transform-origin:50% 0;">7</div>
<div class="abs" style="left:303.5px;top:359.29999999999995px;line-height:0"><svg width="10" height="8" viewBox="0 0 10 8"><ellipse cx="5" cy="4" rx="4.3" ry="2.9" fill="none" stroke="#4a4a4a" stroke-width="1"/><circle cx="5" cy="4" r="1.5" fill="none" stroke="#555" stroke-width="0.9"/><path d="M5 2.8V5.2" stroke="#666" stroke-width="0.7"/></svg></div>
<div class="abs" style="left:330.5px;top:358.2px;line-height:0"><svg width="10" height="10" viewBox="0 0 10 10"><circle cx="5" cy="5" r="4.3" fill="none" stroke="#3c3c3c" stroke-width="1"/><path d="M5 2.6V7.4" stroke="#2a2a2a" stroke-width="1.1"/></svg></div>
<div class="abs" style="left:357.6px;top:358.15px;line-height:0"><svg width="9" height="10" viewBox="0 0 9 10"><path d="M6 0.7H8.1V8H6Z" fill="#b4b4b4"/><path d="M1 2.1Q1 1.2 1.9 1.2H7.9" stroke="#3a3a3a" stroke-width="1.2" fill="none"/><path d="M1 1.8V8.2Q1 9.1 1.9 9.1H5.8V1.2" stroke="#333" stroke-width="1.1" fill="none"/></svg></div>
<div class="t" style="left:384.70px;top:358px;font-size:9.9px;color:#383838;font-weight:normal;transform:scaleX(0.91);-webkit-text-stroke:0.12px currentColor;transform-origin:0 0;">kết bạn nhóm SIÊU SÓNG NÂNG HẠNG 2025-2026 (Linh Trịnh)</div>
<div class="t" style="left:556.55px;width:400px;text-align:center;top:358px;font-size:9.9px;color:#383838;font-weight:normal;transform:scaleX(0.92);-webkit-text-stroke:0.12px currentColor;transform-origin:50% 0;">262</div>
<div class="t" style="left:614.60px;width:400px;text-align:center;top:358px;font-size:9.9px;color:#383838;font-weight:normal;transform:scaleX(0.92);-webkit-text-stroke:0.12px currentColor;transform-origin:50% 0;">105</div>
<div class="t" style="left:670.65px;width:400px;text-align:center;top:358px;font-size:9.9px;color:#383838;font-weight:normal;transform:scaleX(0.92);-webkit-text-stroke:0.12px currentColor;transform-origin:50% 0;">8</div>
<div class="t" style="left:722.05px;width:400px;text-align:center;top:358px;font-size:9.9px;color:#383838;font-weight:normal;transform:scaleX(0.903);-webkit-text-stroke:0.12px currentColor;transform-origin:50% 0;">Chưa chia</div>
<div class="tag tp" style="left:962.3px;width:86.3px;top:355.15px"></div>
<div class="t" style="left:805.90px;width:400px;text-align:center;top:358px;font-size:8.8px;color:#74509a;font-weight:normal;transform:scaleX(0.924);-webkit-text-stroke:0.12px currentColor;transform-origin:50% 0;">09/07/2025 08:18:00</div>
<div class="t" style="left:1073.50px;top:358px;font-size:9.9px;color:#383838;font-weight:normal;transform:scaleX(0.952);-webkit-text-stroke:0.12px currentColor;transform-origin:0 0;">09/07/2025 08:16:54</div>
<div class="tag tg" style="left:1177.8px;width:57.9px;top:355.15px"></div>
<div class="t" style="left:1007.20px;width:400px;text-align:center;top:358px;font-size:8.8px;color:#62923f;font-weight:normal;transform:scaleX(0.889);-webkit-text-stroke:0.12px currentColor;transform-origin:50% 0;">Đang thực thi</div>
<div class="ab" style="left:1264.1px;top:351.95px;background:#ffa600"><svg width="6" height="8" viewBox="0 0 6 8"><rect x="0.9" y="0.5" width="1.1" height="7" fill="#fff" opacity=".75"/><rect x="4" y="0.5" width="1.1" height="7" fill="#fff" opacity=".75"/></svg></div>
<div class="ab" style="left:1292px;top:351.95px;background:#ef3f46"><svg width="9" height="10" viewBox="0 0 9 10"><path d="M0.9 2.4H8.1M3.1 2.3V1.1H5.9V2.3M1.9 2.6L2.4 9H6.6L7.1 2.6" fill="none" stroke="#fff" stroke-opacity=".85" stroke-width="0.95" stroke-linejoin="round"/></svg></div>
<div class="abs" style="left:199.2px;top:389.55px;line-height:0"><svg width="15" height="14" viewBox="0 0 15 14"><rect x="0.8" y="0.8" width="12.6" height="11.8" rx="2.2" fill="#fff" stroke="#5f80a8" stroke-width="1.6"/></svg></div>
<div class="t" style="left:63.55px;width:400px;text-align:center;top:391px;font-size:9.9px;color:#383838;font-weight:normal;transform:scaleX(0.92);-webkit-text-stroke:0.12px currentColor;transform-origin:50% 0;">8</div>
<div class="abs" style="left:303.5px;top:392.2px;line-height:0"><svg width="10" height="8" viewBox="0 0 10 8"><ellipse cx="5" cy="4" rx="4.3" ry="2.9" fill="none" stroke="#4a4a4a" stroke-width="1"/><circle cx="5" cy="4" r="1.5" fill="none" stroke="#555" stroke-width="0.9"/><path d="M5 2.8V5.2" stroke="#666" stroke-width="0.7"/></svg></div>
<div class="abs" style="left:330.5px;top:391.1px;line-height:0"><svg width="10" height="10" viewBox="0 0 10 10"><circle cx="5" cy="5" r="4.3" fill="none" stroke="#3c3c3c" stroke-width="1"/><path d="M5 2.6V7.4" stroke="#2a2a2a" stroke-width="1.1"/></svg></div>
<div class="abs" style="left:357.6px;top:391.05px;line-height:0"><svg width="9" height="10" viewBox="0 0 9 10"><path d="M6 0.7H8.1V8H6Z" fill="#b4b4b4"/><path d="M1 2.1Q1 1.2 1.9 1.2H7.9" stroke="#3a3a3a" stroke-width="1.2" fill="none"/><path d="M1 1.8V8.2Q1 9.1 1.9 9.1H5.8V1.2" stroke="#333" stroke-width="1.1" fill="none"/></svg></div>
<div class="t" style="left:384.70px;top:391px;font-size:9.9px;color:#383838;font-weight:normal;transform:scaleX(0.91);-webkit-text-stroke:0.12px currentColor;transform-origin:0 0;">kết bạn nhóm Cộng Đồng CK Toàn Quốc (Văn Thông)</div>
<div class="t" style="left:556.55px;width:400px;text-align:center;top:391px;font-size:9.9px;color:#383838;font-weight:normal;transform:scaleX(0.92);-webkit-text-stroke:0.12px currentColor;transform-origin:50% 0;">500</div>
<div class="t" style="left:614.60px;width:400px;text-align:center;top:391px;font-size:9.9px;color:#383838;font-weight:normal;transform:scaleX(0.92);-webkit-text-stroke:0.12px currentColor;transform-origin:50% 0;">86</div>
<div class="t" style="left:670.65px;width:400px;text-align:center;top:391px;font-size:9.9px;color:#383838;font-weight:normal;transform:scaleX(0.92);-webkit-text-stroke:0.12px currentColor;transform-origin:50% 0;">35</div>
<div class="t" style="left:722.05px;width:400px;text-align:center;top:391px;font-size:9.9px;color:#383838;font-weight:normal;transform:scaleX(0.903);-webkit-text-stroke:0.12px currentColor;transform-origin:50% 0;">Chưa chia</div>
<div class="tag td" style="left:962.3px;width:86.3px;top:388.05px"></div>
<div class="t" style="left:805.90px;width:400px;text-align:center;top:391px;font-size:8.8px;color:#fff;font-weight:normal;transform:scaleX(0.943);-webkit-text-stroke:0.12px currentColor;transform-origin:50% 0;">09/07/2025 08:01:00</div>
<div class="t" style="left:1073.50px;top:391px;font-size:9.9px;color:#383838;font-weight:normal;transform:scaleX(0.952);-webkit-text-stroke:0.12px currentColor;transform-origin:0 0;">08/07/2025 09:47:02</div>
<div class="tag to" style="left:1183.4px;width:47.8px;top:388.05px"></div>
<div class="t" style="left:1007.30px;width:400px;text-align:center;top:391px;font-size:8.8px;color:#dc9440;font-weight:normal;transform:scaleX(0.894);-webkit-text-stroke:0.12px currentColor;transform-origin:50% 0;">Tạm dừng</div>
<div class="ab" style="left:1264.1px;top:384.85px;background:#06841a"><svg width="6" height="8" viewBox="0 0 6 8"><path d="M1.2 0.9L5 4L1.2 7.1Z" fill="#fff" opacity=".88"/></svg></div>
<div class="ab" style="left:1292px;top:384.85px;background:#ef3f46"><svg width="9" height="10" viewBox="0 0 9 10"><path d="M0.9 2.4H8.1M3.1 2.3V1.1H5.9V2.3M1.9 2.6L2.4 9H6.6L7.1 2.6" fill="none" stroke="#fff" stroke-opacity=".85" stroke-width="0.95" stroke-linejoin="round"/></svg></div>
<div class="abs" style="left:199.2px;top:422.45px;line-height:0"><svg width="15" height="14" viewBox="0 0 15 14"><rect x="0.8" y="0.8" width="12.6" height="11.8" rx="2.2" fill="#fff" stroke="#5f80a8" stroke-width="1.6"/></svg></div>
<div class="t" style="left:63.55px;width:400px;text-align:center;top:424px;font-size:9.9px;color:#383838;font-weight:normal;transform:scaleX(0.92);-webkit-text-stroke:0.12px currentColor;transform-origin:50% 0;">9</div>
<div class="abs" style="left:303.5px;top:425.09999999999997px;line-height:0"><svg width="10" height="8" viewBox="0 0 10 8"><ellipse cx="5" cy="4" rx="4.3" ry="2.9" fill="none" stroke="#4a4a4a" stroke-width="1"/><circle cx="5" cy="4" r="1.5" fill="none" stroke="#555" stroke-width="0.9"/><path d="M5 2.8V5.2" stroke="#666" stroke-width="0.7"/></svg></div>
<div class="abs" style="left:330.5px;top:424.0px;line-height:0"><svg width="10" height="10" viewBox="0 0 10 10"><circle cx="5" cy="5" r="4.3" fill="none" stroke="#3c3c3c" stroke-width="1"/><path d="M5 2.6V7.4" stroke="#2a2a2a" stroke-width="1.1"/></svg></div>
<div class="abs" style="left:357.6px;top:423.95px;line-height:0"><svg width="9" height="10" viewBox="0 0 9 10"><path d="M6 0.7H8.1V8H6Z" fill="#b4b4b4"/><path d="M1 2.1Q1 1.2 1.9 1.2H7.9" stroke="#3a3a3a" stroke-width="1.2" fill="none"/><path d="M1 1.8V8.2Q1 9.1 1.9 9.1H5.8V1.2" stroke="#333" stroke-width="1.1" fill="none"/></svg></div>
<div class="t" style="left:384.70px;top:424px;font-size:9.9px;color:#383838;font-weight:normal;transform:scaleX(0.91);-webkit-text-stroke:0.12px currentColor;transform-origin:0 0;">kết bạn nhóm Quần Áo Ninh Hiệp (Minh Vương)</div>
<div class="t" style="left:556.55px;width:400px;text-align:center;top:424px;font-size:9.9px;color:#383838;font-weight:normal;transform:scaleX(0.92);-webkit-text-stroke:0.12px currentColor;transform-origin:50% 0;">346</div>
<div class="t" style="left:614.60px;width:400px;text-align:center;top:424px;font-size:9.9px;color:#383838;font-weight:normal;transform:scaleX(0.92);-webkit-text-stroke:0.12px currentColor;transform-origin:50% 0;">138</div>
<div class="t" style="left:670.65px;width:400px;text-align:center;top:424px;font-size:9.9px;color:#383838;font-weight:normal;transform:scaleX(0.92);-webkit-text-stroke:0.12px currentColor;transform-origin:50% 0;">11</div>
<div class="t" style="left:722.05px;width:400px;text-align:center;top:424px;font-size:9.9px;color:#383838;font-weight:normal;transform:scaleX(0.903);-webkit-text-stroke:0.12px currentColor;transform-origin:50% 0;">Chưa chia</div>
<div class="tag tp" style="left:962.3px;width:86.3px;top:420.95px"></div>
<div class="t" style="left:805.90px;width:400px;text-align:center;top:424px;font-size:8.8px;color:#74509a;font-weight:normal;transform:scaleX(0.924);-webkit-text-stroke:0.12px currentColor;transform-origin:50% 0;">09/07/2025 08:01:00</div>
<div class="t" style="left:1073.50px;top:424px;font-size:9.9px;color:#383838;font-weight:normal;transform:scaleX(0.952);-webkit-text-stroke:0.12px currentColor;transform-origin:0 0;">08/07/2025 09:36:42</div>
<div class="tag tg" style="left:1177.8px;width:57.9px;top:420.95px"></div>
<div class="t" style="left:1007.20px;width:400px;text-align:center;top:424px;font-size:8.8px;color:#62923f;font-weight:normal;transform:scaleX(0.889);-webkit-text-stroke:0.12px currentColor;transform-origin:50% 0;">Đang thực thi</div>
<div class="ab" style="left:1264.1px;top:417.75px;background:#ffa600"><svg width="6" height="8" viewBox="0 0 6 8"><rect x="0.9" y="0.5" width="1.1" height="7" fill="#fff" opacity=".75"/><rect x="4" y="0.5" width="1.1" height="7" fill="#fff" opacity=".75"/></svg></div>
<div class="ab" style="left:1292px;top:417.75px;background:#ef3f46"><svg width="9" height="10" viewBox="0 0 9 10"><path d="M0.9 2.4H8.1M3.1 2.3V1.1H5.9V2.3M1.9 2.6L2.4 9H6.6L7.1 2.6" fill="none" stroke="#fff" stroke-opacity=".85" stroke-width="0.95" stroke-linejoin="round"/></svg></div>
<div class="abs" style="left:199.2px;top:455.34999999999997px;line-height:0"><svg width="15" height="14" viewBox="0 0 15 14"><rect x="0.8" y="0.8" width="12.6" height="11.8" rx="2.2" fill="#fff" stroke="#5f80a8" stroke-width="1.6"/></svg></div>
<div class="t" style="left:63.55px;width:400px;text-align:center;top:457px;font-size:9.9px;color:#383838;font-weight:normal;transform:scaleX(0.92);-webkit-text-stroke:0.12px currentColor;transform-origin:50% 0;">10</div>
<div class="abs" style="left:303.5px;top:457.99999999999994px;line-height:0"><svg width="10" height="8" viewBox="0 0 10 8"><ellipse cx="5" cy="4" rx="4.3" ry="2.9" fill="none" stroke="#4a4a4a" stroke-width="1"/><circle cx="5" cy="4" r="1.5" fill="none" stroke="#555" stroke-width="0.9"/><path d="M5 2.8V5.2" stroke="#666" stroke-width="0.7"/></svg></div>
<div class="abs" style="left:330.5px;top:456.9px;line-height:0"><svg width="10" height="10" viewBox="0 0 10 10"><circle cx="5" cy="5" r="4.3" fill="none" stroke="#3c3c3c" stroke-width="1"/><path d="M5 2.6V7.4" stroke="#2a2a2a" stroke-width="1.1"/></svg></div>
<div class="abs" style="left:357.6px;top:456.84999999999997px;line-height:0"><svg width="9" height="10" viewBox="0 0 9 10"><path d="M6 0.7H8.1V8H6Z" fill="#b4b4b4"/><path d="M1 2.1Q1 1.2 1.9 1.2H7.9" stroke="#3a3a3a" stroke-width="1.2" fill="none"/><path d="M1 1.8V8.2Q1 9.1 1.9 9.1H5.8V1.2" stroke="#333" stroke-width="1.1" fill="none"/></svg></div>
<div class="t" style="left:384.70px;top:457px;font-size:9.9px;color:#383838;font-weight:normal;transform:scaleX(0.91);-webkit-text-stroke:0.12px currentColor;transform-origin:0 0;">kết bạn nhóm Quần Áo Ninh Hiệp (Trần Thị Vinh)</div>
<div class="t" style="left:556.55px;width:400px;text-align:center;top:457px;font-size:9.9px;color:#383838;font-weight:normal;transform:scaleX(0.92);-webkit-text-stroke:0.12px currentColor;transform-origin:50% 0;">495</div>
<div class="t" style="left:614.60px;width:400px;text-align:center;top:457px;font-size:9.9px;color:#383838;font-weight:normal;transform:scaleX(0.92);-webkit-text-stroke:0.12px currentColor;transform-origin:50% 0;">137</div>
<div class="t" style="left:670.65px;width:400px;text-align:center;top:457px;font-size:9.9px;color:#383838;font-weight:normal;transform:scaleX(0.92);-webkit-text-stroke:0.12px currentColor;transform-origin:50% 0;">13</div>
<div class="t" style="left:722.05px;width:400px;text-align:center;top:457px;font-size:9.9px;color:#383838;font-weight:normal;transform:scaleX(0.903);-webkit-text-stroke:0.12px currentColor;transform-origin:50% 0;">Chưa chia</div>
<div class="tag tp" style="left:962.3px;width:86.3px;top:453.85px"></div>
<div class="t" style="left:805.90px;width:400px;text-align:center;top:457px;font-size:8.8px;color:#74509a;font-weight:normal;transform:scaleX(0.924);-webkit-text-stroke:0.12px currentColor;transform-origin:50% 0;">09/07/2025 08:00:30</div>
<div class="t" style="left:1073.50px;top:457px;font-size:9.9px;color:#383838;font-weight:normal;transform:scaleX(0.952);-webkit-text-stroke:0.12px currentColor;transform-origin:0 0;">08/07/2025 09:32:51</div>
<div class="tag tg" style="left:1177.8px;width:57.9px;top:453.85px"></div>
<div class="t" style="left:1007.20px;width:400px;text-align:center;top:456px;font-size:8.8px;color:#62923f;font-weight:normal;transform:scaleX(0.889);-webkit-text-stroke:0.12px currentColor;transform-origin:50% 0;">Đang thực thi</div>
<div class="ab" style="left:1264.1px;top:450.65px;background:#ffa600"><svg width="6" height="8" viewBox="0 0 6 8"><rect x="0.9" y="0.5" width="1.1" height="7" fill="#fff" opacity=".75"/><rect x="4" y="0.5" width="1.1" height="7" fill="#fff" opacity=".75"/></svg></div>
<div class="ab" style="left:1292px;top:450.65px;background:#ef3f46"><svg width="9" height="10" viewBox="0 0 9 10"><path d="M0.9 2.4H8.1M3.1 2.3V1.1H5.9V2.3M1.9 2.6L2.4 9H6.6L7.1 2.6" fill="none" stroke="#fff" stroke-opacity=".85" stroke-width="0.95" stroke-linejoin="round"/></svg></div>
<div class="abs" style="left:199.2px;top:488.25px;line-height:0"><svg width="15" height="14" viewBox="0 0 15 14"><rect x="0.8" y="0.8" width="12.6" height="11.8" rx="2.2" fill="#fff" stroke="#5f80a8" stroke-width="1.6"/></svg></div>
<div class="t" style="left:63.55px;width:400px;text-align:center;top:490px;font-size:9.9px;color:#383838;font-weight:normal;transform:scaleX(0.92);-webkit-text-stroke:0.12px currentColor;transform-origin:50% 0;">11</div>
<div class="abs" style="left:303.5px;top:490.9px;line-height:0"><svg width="10" height="8" viewBox="0 0 10 8"><ellipse cx="5" cy="4" rx="4.3" ry="2.9" fill="none" stroke="#4a4a4a" stroke-width="1"/><circle cx="5" cy="4" r="1.5" fill="none" stroke="#555" stroke-width="0.9"/><path d="M5 2.8V5.2" stroke="#666" stroke-width="0.7"/></svg></div>
<div class="abs" style="left:330.5px;top:489.8px;line-height:0"><svg width="10" height="10" viewBox="0 0 10 10"><circle cx="5" cy="5" r="4.3" fill="none" stroke="#3c3c3c" stroke-width="1"/><path d="M5 2.6V7.4" stroke="#2a2a2a" stroke-width="1.1"/></svg></div>
<div class="abs" style="left:357.6px;top:489.75px;line-height:0"><svg width="9" height="10" viewBox="0 0 9 10"><path d="M6 0.7H8.1V8H6Z" fill="#b4b4b4"/><path d="M1 2.1Q1 1.2 1.9 1.2H7.9" stroke="#3a3a3a" stroke-width="1.2" fill="none"/><path d="M1 1.8V8.2Q1 9.1 1.9 9.1H5.8V1.2" stroke="#333" stroke-width="1.1" fill="none"/></svg></div>
<div class="t" style="left:384.70px;top:490px;font-size:9.9px;color:#383838;font-weight:normal;transform:scaleX(0.91);-webkit-text-stroke:0.12px currentColor;transform-origin:0 0;">Kết bạn nhóm Khách VIP nhà cô Bông (Lương Phúc Duyên)</div>
<div class="t" style="left:556.55px;width:400px;text-align:center;top:490px;font-size:9.9px;color:#383838;font-weight:normal;transform:scaleX(0.92);-webkit-text-stroke:0.12px currentColor;transform-origin:50% 0;">410</div>
<div class="t" style="left:614.60px;width:400px;text-align:center;top:490px;font-size:9.9px;color:#383838;font-weight:normal;transform:scaleX(0.92);-webkit-text-stroke:0.12px currentColor;transform-origin:50% 0;">132</div>
<div class="t" style="left:670.65px;width:400px;text-align:center;top:490px;font-size:9.9px;color:#383838;font-weight:normal;transform:scaleX(0.92);-webkit-text-stroke:0.12px currentColor;transform-origin:50% 0;">14</div>
<div class="t" style="left:722.05px;width:400px;text-align:center;top:490px;font-size:9.9px;color:#383838;font-weight:normal;transform:scaleX(0.903);-webkit-text-stroke:0.12px currentColor;transform-origin:50% 0;">Chưa chia</div>
<div class="tag tp" style="left:962.3px;width:86.3px;top:486.75px"></div>
<div class="t" style="left:805.90px;width:400px;text-align:center;top:490px;font-size:8.8px;color:#74509a;font-weight:normal;transform:scaleX(0.924);-webkit-text-stroke:0.12px currentColor;transform-origin:50% 0;">09/07/2025 09:00:30</div>
<div class="t" style="left:1073.50px;top:490px;font-size:9.9px;color:#383838;font-weight:normal;transform:scaleX(0.952);-webkit-text-stroke:0.12px currentColor;transform-origin:0 0;">08/07/2025 09:19:33</div>
<div class="tag tg" style="left:1177.8px;width:57.9px;top:486.75px"></div>
<div class="t" style="left:1007.20px;width:400px;text-align:center;top:489px;font-size:8.8px;color:#62923f;font-weight:normal;transform:scaleX(0.889);-webkit-text-stroke:0.12px currentColor;transform-origin:50% 0;">Đang thực thi</div>
<div class="ab" style="left:1264.1px;top:483.55px;background:#ffa600"><svg width="6" height="8" viewBox="0 0 6 8"><rect x="0.9" y="0.5" width="1.1" height="7" fill="#fff" opacity=".75"/><rect x="4" y="0.5" width="1.1" height="7" fill="#fff" opacity=".75"/></svg></div>
<div class="ab" style="left:1292px;top:483.55px;background:#ef3f46"><svg width="9" height="10" viewBox="0 0 9 10"><path d="M0.9 2.4H8.1M3.1 2.3V1.1H5.9V2.3M1.9 2.6L2.4 9H6.6L7.1 2.6" fill="none" stroke="#fff" stroke-opacity=".85" stroke-width="0.95" stroke-linejoin="round"/></svg></div>
<div class="abs" style="left:199.2px;top:521.15px;line-height:0"><svg width="15" height="14" viewBox="0 0 15 14"><rect x="0.8" y="0.8" width="12.6" height="11.8" rx="2.2" fill="#fff" stroke="#5f80a8" stroke-width="1.6"/></svg></div>
<div class="t" style="left:63.55px;width:400px;text-align:center;top:522px;font-size:9.9px;color:#383838;font-weight:normal;transform:scaleX(0.92);-webkit-text-stroke:0.12px currentColor;transform-origin:50% 0;">12</div>
<div class="abs" style="left:303.5px;top:523.8px;line-height:0"><svg width="10" height="8" viewBox="0 0 10 8"><ellipse cx="5" cy="4" rx="4.3" ry="2.9" fill="none" stroke="#4a4a4a" stroke-width="1"/><circle cx="5" cy="4" r="1.5" fill="none" stroke="#555" stroke-width="0.9"/><path d="M5 2.8V5.2" stroke="#666" stroke-width="0.7"/></svg></div>
<div class="abs" style="left:330.5px;top:522.6999999999999px;line-height:0"><svg width="10" height="10" viewBox="0 0 10 10"><circle cx="5" cy="5" r="4.3" fill="none" stroke="#3c3c3c" stroke-width="1"/><path d="M5 2.6V7.4" stroke="#2a2a2a" stroke-width="1.1"/></svg></div>
<div class="abs" style="left:357.6px;top:522.65px;line-height:0"><svg width="9" height="10" viewBox="0 0 9 10"><path d="M6 0.7H8.1V8H6Z" fill="#b4b4b4"/><path d="M1 2.1Q1 1.2 1.9 1.2H7.9" stroke="#3a3a3a" stroke-width="1.2" fill="none"/><path d="M1 1.8V8.2Q1 9.1 1.9 9.1H5.8V1.2" stroke="#333" stroke-width="1.1" fill="none"/></svg></div>
<div class="t" style="left:384.70px;top:522px;font-size:9.9px;color:#383838;font-weight:normal;transform:scaleX(0.91);-webkit-text-stroke:0.12px currentColor;transform-origin:0 0;">Kết bạn nhóm Khách VIP nhà cô Bông (Hằng Heo)</div>
<div class="t" style="left:556.55px;width:400px;text-align:center;top:522px;font-size:9.9px;color:#383838;font-weight:normal;transform:scaleX(0.92);-webkit-text-stroke:0.12px currentColor;transform-origin:50% 0;">400</div>
<div class="t" style="left:614.60px;width:400px;text-align:center;top:522px;font-size:9.9px;color:#383838;font-weight:normal;transform:scaleX(0.92);-webkit-text-stroke:0.12px currentColor;transform-origin:50% 0;">134</div>
<div class="t" style="left:670.65px;width:400px;text-align:center;top:522px;font-size:9.9px;color:#383838;font-weight:normal;transform:scaleX(0.92);-webkit-text-stroke:0.12px currentColor;transform-origin:50% 0;">15</div>
<div class="t" style="left:722.05px;width:400px;text-align:center;top:522px;font-size:9.9px;color:#383838;font-weight:normal;transform:scaleX(0.903);-webkit-text-stroke:0.12px currentColor;transform-origin:50% 0;">Chưa chia</div>
<div class="tag tp" style="left:962.3px;width:86.3px;top:519.65px"></div>
<div class="t" style="left:805.90px;width:400px;text-align:center;top:523px;font-size:8.8px;color:#74509a;font-weight:normal;transform:scaleX(0.924);-webkit-text-stroke:0.12px currentColor;transform-origin:50% 0;">09/07/2025 08:01:00</div>
<div class="t" style="left:1073.50px;top:522px;font-size:9.9px;color:#383838;font-weight:normal;transform:scaleX(0.952);-webkit-text-stroke:0.12px currentColor;transform-origin:0 0;">08/07/2025 09:13:51</div>
<div class="tag tg" style="left:1177.8px;width:57.9px;top:519.65px"></div>
<div class="t" style="left:1007.20px;width:400px;text-align:center;top:522px;font-size:8.8px;color:#62923f;font-weight:normal;transform:scaleX(0.889);-webkit-text-stroke:0.12px currentColor;transform-origin:50% 0;">Đang thực thi</div>
<div class="ab" style="left:1264.1px;top:516.45px;background:#ffa600"><svg width="6" height="8" viewBox="0 0 6 8"><rect x="0.9" y="0.5" width="1.1" height="7" fill="#fff" opacity=".75"/><rect x="4" y="0.5" width="1.1" height="7" fill="#fff" opacity=".75"/></svg></div>
<div class="ab" style="left:1292px;top:516.45px;background:#ef3f46"><svg width="9" height="10" viewBox="0 0 9 10"><path d="M0.9 2.4H8.1M3.1 2.3V1.1H5.9V2.3M1.9 2.6L2.4 9H6.6L7.1 2.6" fill="none" stroke="#fff" stroke-opacity=".85" stroke-width="0.95" stroke-linejoin="round"/></svg></div>
<div class="abs" style="left:199.2px;top:554.05px;line-height:0"><svg width="15" height="14" viewBox="0 0 15 14"><rect x="0.8" y="0.8" width="12.6" height="11.8" rx="2.2" fill="#fff" stroke="#5f80a8" stroke-width="1.6"/></svg></div>
<div class="t" style="left:63.55px;width:400px;text-align:center;top:555px;font-size:9.9px;color:#383838;font-weight:normal;transform:scaleX(0.92);-webkit-text-stroke:0.12px currentColor;transform-origin:50% 0;">13</div>
<div class="abs" style="left:303.5px;top:556.6999999999999px;line-height:0"><svg width="10" height="8" viewBox="0 0 10 8"><ellipse cx="5" cy="4" rx="4.3" ry="2.9" fill="none" stroke="#4a4a4a" stroke-width="1"/><circle cx="5" cy="4" r="1.5" fill="none" stroke="#555" stroke-width="0.9"/><path d="M5 2.8V5.2" stroke="#666" stroke-width="0.7"/></svg></div>
<div class="abs" style="left:330.5px;top:555.5999999999999px;line-height:0"><svg width="10" height="10" viewBox="0 0 10 10"><circle cx="5" cy="5" r="4.3" fill="none" stroke="#3c3c3c" stroke-width="1"/><path d="M5 2.6V7.4" stroke="#2a2a2a" stroke-width="1.1"/></svg></div>
<div class="abs" style="left:357.6px;top:555.55px;line-height:0"><svg width="9" height="10" viewBox="0 0 9 10"><path d="M6 0.7H8.1V8H6Z" fill="#b4b4b4"/><path d="M1 2.1Q1 1.2 1.9 1.2H7.9" stroke="#3a3a3a" stroke-width="1.2" fill="none"/><path d="M1 1.8V8.2Q1 9.1 1.9 9.1H5.8V1.2" stroke="#333" stroke-width="1.1" fill="none"/></svg></div>
<div class="t" style="left:384.70px;top:555px;font-size:9.9px;color:#383838;font-weight:normal;transform:scaleX(0.91);-webkit-text-stroke:0.12px currentColor;transform-origin:0 0;">kết bạn nhóm TLBB TRÙNG PHÙNG PC - NHÓM 2 (Lê Yến)</div>
<div class="t" style="left:556.55px;width:400px;text-align:center;top:555px;font-size:9.9px;color:#383838;font-weight:normal;transform:scaleX(0.92);-webkit-text-stroke:0.12px currentColor;transform-origin:50% 0;">463</div>
<div class="t" style="left:614.60px;width:400px;text-align:center;top:555px;font-size:9.9px;color:#383838;font-weight:normal;transform:scaleX(0.92);-webkit-text-stroke:0.12px currentColor;transform-origin:50% 0;">30</div>
<div class="t" style="left:670.65px;width:400px;text-align:center;top:555px;font-size:9.9px;color:#383838;font-weight:normal;transform:scaleX(0.92);-webkit-text-stroke:0.12px currentColor;transform-origin:50% 0;">8</div>
<div class="t" style="left:722.05px;width:400px;text-align:center;top:555px;font-size:9.9px;color:#383838;font-weight:normal;transform:scaleX(0.903);-webkit-text-stroke:0.12px currentColor;transform-origin:50% 0;">Chưa chia</div>
<div class="tag td" style="left:962.3px;width:86.3px;top:552.55px"></div>
<div class="t" style="left:805.90px;width:400px;text-align:center;top:555px;font-size:8.8px;color:#fff;font-weight:normal;transform:scaleX(0.943);-webkit-text-stroke:0.12px currentColor;transform-origin:50% 0;">09/07/2025 08:00:30</div>
<div class="t" style="left:1073.50px;top:555px;font-size:9.9px;color:#383838;font-weight:normal;transform:scaleX(0.952);-webkit-text-stroke:0.12px currentColor;transform-origin:0 0;">08/07/2025 09:02:02</div>
<div class="tag to" style="left:1183.4px;width:47.8px;top:552.55px"></div>
<div class="t" style="left:1007.30px;width:400px;text-align:center;top:555px;font-size:8.8px;color:#dc9440;font-weight:normal;transform:scaleX(0.894);-webkit-text-stroke:0.12px currentColor;transform-origin:50% 0;">Tạm dừng</div>
<div class="ab" style="left:1264.1px;top:549.35px;background:#06841a"><svg width="6" height="8" viewBox="0 0 6 8"><path d="M1.2 0.9L5 4L1.2 7.1Z" fill="#fff" opacity=".88"/></svg></div>
<div class="ab" style="left:1292px;top:549.35px;background:#ef3f46"><svg width="9" height="10" viewBox="0 0 9 10"><path d="M0.9 2.4H8.1M3.1 2.3V1.1H5.9V2.3M1.9 2.6L2.4 9H6.6L7.1 2.6" fill="none" stroke="#fff" stroke-opacity=".85" stroke-width="0.95" stroke-linejoin="round"/></svg></div>
<div class="abs" style="left:199.2px;top:586.95px;line-height:0"><svg width="15" height="14" viewBox="0 0 15 14"><rect x="0.8" y="0.8" width="12.6" height="11.8" rx="2.2" fill="#fff" stroke="#5f80a8" stroke-width="1.6"/></svg></div>
<div class="t" style="left:63.55px;width:400px;text-align:center;top:588px;font-size:9.9px;color:#383838;font-weight:normal;transform:scaleX(0.92);-webkit-text-stroke:0.12px currentColor;transform-origin:50% 0;">14</div>
<div class="abs" style="left:303.5px;top:589.6px;line-height:0"><svg width="10" height="8" viewBox="0 0 10 8"><ellipse cx="5" cy="4" rx="4.3" ry="2.9" fill="none" stroke="#4a4a4a" stroke-width="1"/><circle cx="5" cy="4" r="1.5" fill="none" stroke="#555" stroke-width="0.9"/><path d="M5 2.8V5.2" stroke="#666" stroke-width="0.7"/></svg></div>
<div class="abs" style="left:330.5px;top:588.5px;line-height:0"><svg width="10" height="10" viewBox="0 0 10 10"><circle cx="5" cy="5" r="4.3" fill="none" stroke="#3c3c3c" stroke-width="1"/><path d="M5 2.6V7.4" stroke="#2a2a2a" stroke-width="1.1"/></svg></div>
<div class="abs" style="left:357.6px;top:588.45px;line-height:0"><svg width="9" height="10" viewBox="0 0 9 10"><path d="M6 0.7H8.1V8H6Z" fill="#b4b4b4"/><path d="M1 2.1Q1 1.2 1.9 1.2H7.9" stroke="#3a3a3a" stroke-width="1.2" fill="none"/><path d="M1 1.8V8.2Q1 9.1 1.9 9.1H5.8V1.2" stroke="#333" stroke-width="1.1" fill="none"/></svg></div>
<div class="t" style="left:384.70px;top:588px;font-size:9.9px;color:#383838;font-weight:normal;transform:scaleX(0.91);-webkit-text-stroke:0.12px currentColor;transform-origin:0 0;">kết bạn nhóm TLBB TRÙNG PHÙNG PC - NHÓM 2 (De Kim Chi)</div>
<div class="t" style="left:556.55px;width:400px;text-align:center;top:588px;font-size:9.9px;color:#383838;font-weight:normal;transform:scaleX(0.92);-webkit-text-stroke:0.12px currentColor;transform-origin:50% 0;">385</div>
<div class="t" style="left:614.60px;width:400px;text-align:center;top:588px;font-size:9.9px;color:#383838;font-weight:normal;transform:scaleX(0.92);-webkit-text-stroke:0.12px currentColor;transform-origin:50% 0;">138</div>
<div class="t" style="left:670.65px;width:400px;text-align:center;top:588px;font-size:9.9px;color:#383838;font-weight:normal;transform:scaleX(0.92);-webkit-text-stroke:0.12px currentColor;transform-origin:50% 0;">14</div>
<div class="t" style="left:722.05px;width:400px;text-align:center;top:588px;font-size:9.9px;color:#383838;font-weight:normal;transform:scaleX(0.903);-webkit-text-stroke:0.12px currentColor;transform-origin:50% 0;">Chưa chia</div>
<div class="tag tp" style="left:962.3px;width:86.3px;top:585.45px"></div>
<div class="t" style="left:805.90px;width:400px;text-align:center;top:588px;font-size:8.8px;color:#74509a;font-weight:normal;transform:scaleX(0.924);-webkit-text-stroke:0.12px currentColor;transform-origin:50% 0;">09/07/2025 08:03:30</div>
<div class="t" style="left:1073.50px;top:588px;font-size:9.9px;color:#383838;font-weight:normal;transform:scaleX(0.952);-webkit-text-stroke:0.12px currentColor;transform-origin:0 0;">08/07/2025 08:57:32</div>
<div class="tag tg" style="left:1177.8px;width:57.9px;top:585.45px"></div>
<div class="t" style="left:1007.20px;width:400px;text-align:center;top:588px;font-size:8.8px;color:#62923f;font-weight:normal;transform:scaleX(0.889);-webkit-text-stroke:0.12px currentColor;transform-origin:50% 0;">Đang thực thi</div>
<div class="ab" style="left:1264.1px;top:582.25px;background:#ffa600"><svg width="6" height="8" viewBox="0 0 6 8"><rect x="0.9" y="0.5" width="1.1" height="7" fill="#fff" opacity=".75"/><rect x="4" y="0.5" width="1.1" height="7" fill="#fff" opacity=".75"/></svg></div>
<div class="ab" style="left:1292px;top:582.25px;background:#ef3f46"><svg width="9" height="10" viewBox="0 0 9 10"><path d="M0.9 2.4H8.1M3.1 2.3V1.1H5.9V2.3M1.9 2.6L2.4 9H6.6L7.1 2.6" fill="none" stroke="#fff" stroke-opacity=".85" stroke-width="0.95" stroke-linejoin="round"/></svg></div>
<div class="abs" style="left:154px;top:607px;width:1166px;height:1px;background:#dcdcdc"></div>
<div class="t" style="left:1065.00px;top:532px;font-size:19.5px;color:rgba(130,130,130,.42);font-weight:normal;transform:scaleX(1.0);transform-origin:0 0;">Activate Windows</div>
<div class="t" style="left:1065.00px;top:556px;font-size:14.2px;color:rgba(130,130,130,.42);font-weight:normal;transform:scaleX(1.065);transform-origin:0 0;">Go to Settings to activate Windows.</div>
</body></html>
